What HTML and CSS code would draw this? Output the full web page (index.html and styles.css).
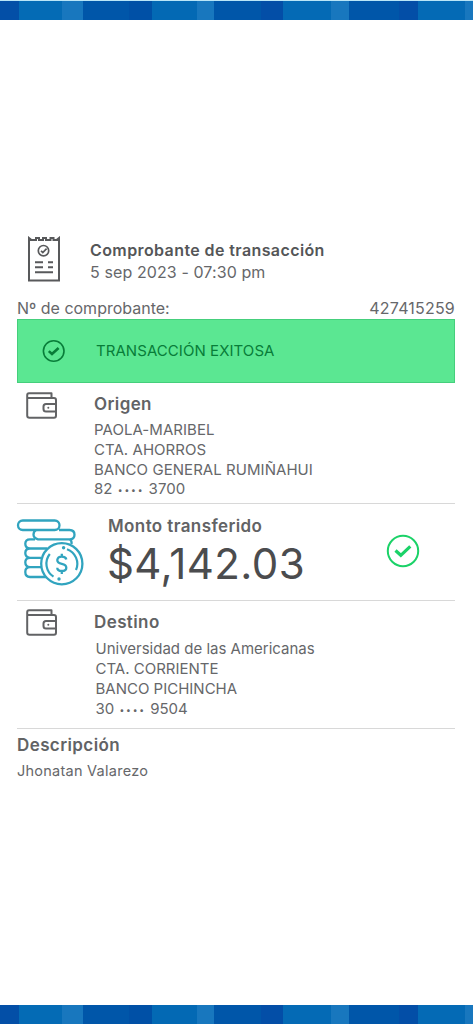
FILE: index.html
```html
<!DOCTYPE html>
<html lang="es">
<head>
<meta charset="utf-8">
<title>Comprobante de transacción</title>
<link rel="stylesheet" href="styles.css">
</head>
<body>
<div class="page">
  <div class="stripe stripe-top"></div>
  <main class="receipt">
    <header class="head">
      <svg class="icon-receipt" width="34" height="46" viewBox="0 0 34 46" fill="none" stroke="#58595b" stroke-width="2">
        <path d="M2 2V44.500H32V2L29.500 4H26.500V2H23.500V4H19V2H16V4H12V2H9V4H4.500Z"/>
        <circle cx="16.500" cy="14.700" r="5.200" stroke-width="1.700"/>
        <path d="M14 14.900l1.800 1.600 3.800-3.900" stroke-width="1.700"/>
        <path d="M8 26.200h8M21 26.200h5M8 31.200h8M21 31.200h5M8 36.200h18"/>
      </svg>
      <div>
        <h1 class="title">Comprobante de transacción</h1>
        <p class="date">5 sep 2023 - 07:30 pm</p>
      </div>
    </header>
    <div class="number"><span class="number-label">Nº de comprobante:</span><span class="number-value">427415259</span></div>
    <div class="status">
      <svg width="24" height="24" viewBox="0 0 24 24" fill="none" stroke="#087d39">
        <circle cx="11.700" cy="12" r="10.300" stroke-width="1.600"/>
        <path d="M6.800 12.100l3.200 2.900 6.600-6" stroke-width="2.600"/>
      </svg>
      <span class="status-text">TRANSACCIÓN EXITOSA</span>
    </div>
    <section class="account origin">
      <svg class="icon-wallet" width="32" height="28" viewBox="0 0 32 28" fill="none" stroke="#626365" stroke-width="2" stroke-linejoin="round">
        <path d="M25.500 6V1.300H3Q1.200 1.300 1.200 3.300V23.500Q1.200 25.800 3.500 25.800H28Q30 25.800 30 23.500V8Q30 6 28 6H1.200M30 12H20Q17.500 12 17.500 14.500V17Q17.500 19.500 20 19.500H30"/>
        <circle cx="22.300" cy="15.700" r="1" fill="#626365" stroke="none"/>
      </svg>
      <div>
        <h2 class="heading">Origen</h2>
        <p class="line">PAOLA-MARIBEL</p>
        <p class="line">CTA. AHORROS</p>
        <p class="line">BANCO GENERAL RUMIÑAHUI</p>
        <p class="line">82 <span class="dots">••••</span> 3700</p>
      </div>
    </section>
    <section class="amount">
      <svg class="icon-coins" width="68" height="68" viewBox="0 0 68 68" fill="none" stroke="#31a4bf" stroke-width="2.300">
        <rect x="2" y="1.500" width="41.500" height="9.500" rx="4.750"/>
        <path d="M20 11Q17.500 12.500 17.500 15.700T22 20.300H53.500Q58.500 20.300 58.500 15.700T53.500 11H43"/>
        <path d="M19 20.300H14Q9.300 20.300 9.300 24.800T14 29.500H31M14 29.500Q9.300 29.500 9.300 34T14 38.800H25M14 38.800Q9.300 38.800 9.300 43.300T14 48.200H25M14 48.200Q9.300 48.200 9.300 53T14 58H30M54 20.300Q56 22 55.500 25"/>
        <circle cx="45.800" cy="44.700" r="20.600"/>
        <path d="M33.800 35A15.500 15.500 0 0 0 37.500 57.700M51 30.200A15.500 15.500 0 0 1 60 51" stroke-width="2.200"/>
        <path d="M50.300 40.500Q49.800 37.700 45.800 37.700T41.300 41Q41.300 44 45.800 44.800T50.300 48.700Q50.300 52 45.800 52T41.300 48.700M45.800 34.700V37.700M45.800 52V55"/>
        <circle cx="47.600" cy="28.800" r="1.700" fill="#31a4bf" stroke="none"/>
        <circle cx="43" cy="60" r="1.700" fill="#31a4bf" stroke="none"/>
      </svg>
      <div class="amount-text">
        <h2 class="heading">Monto transferido</h2>
        <p class="total">$4,142.03</p>
      </div>
      <svg class="icon-check" width="34" height="34" viewBox="0 0 34 34" fill="none" stroke="#1bd268">
        <circle cx="17" cy="17" r="15.200" stroke-width="2"/>
        <path d="M9.500 16.500l5.300 4.800 9.500-9" stroke-width="3.200"/>
      </svg>
    </section>
    <section class="account target">
      <svg class="icon-wallet" width="32" height="28" viewBox="0 0 32 28" fill="none" stroke="#626365" stroke-width="2" stroke-linejoin="round">
        <path d="M25.500 6V1.300H3Q1.200 1.300 1.200 3.300V23.500Q1.200 25.800 3.500 25.800H28Q30 25.800 30 23.500V8Q30 6 28 6H1.200M30 12H20Q17.500 12 17.500 14.500V17Q17.500 19.500 20 19.500H30"/>
        <circle cx="22.300" cy="15.700" r="1" fill="#626365" stroke="none"/>
      </svg>
      <div>
        <h2 class="heading">Destino</h2>
        <p class="line">Universidad de las Americanas</p>
        <p class="line">CTA. CORRIENTE</p>
        <p class="line">BANCO PICHINCHA</p>
        <p class="line">30 <span class="dots">••••</span> 9504</p>
      </div>
    </section>
    <section class="description">
      <h2 class="heading">Descripción</h2>
      <p class="line">Jhonatan Valarezo</p>
    </section>
  </main>
  <div class="stripe stripe-bottom"></div>
</div>
</body>
</html>
```
FILE: styles.css
```css
* { box-sizing: border-box; }
body, h1, h2, p { margin: 0; }
body { background: #fff; color: #66676a; font-family: Inter, "Liberation Sans", sans-serif; }
svg { display: block; flex: none; }
.page { width: 473px; height: 1024px; display: flex; flex-direction: column; overflow: hidden; }
.stripe {
  flex: none;
  background: linear-gradient(90deg, #034fa7 0 19px, #046bb5 19px 62px, #1877be 62px 83px, #0056a9 83px 129px, #0050a6 129px 152px, #0369b4 152px 197px, #1877be 197px 214px, #0056a9 214px 261px, #034ea7 261px 283px, #046ab5 283px 331px, #1877be 331px 349px, #0056a9 349px 399px, #034ea7 399px 418px, #046ab5 418px 465px, #1877be 465px);
}
.stripe-top { height: 20px; border-top: 1px solid #b9e5f7; }
.stripe-bottom { height: 19px; }
.receipt { flex: 1; padding: 216px 18px 0 17px; }
.head { height: 62px; display: flex; }
.head > div { padding-top: 3px; }
.icon-receipt { margin-right: 29px; margin-left: 10px; }
.title { font-size: 16px; line-height: 22px; font-weight: 600; color: #555658; letter-spacing: .4px; white-space: nowrap; }
.date { font-size: 16px; line-height: 22px; letter-spacing: .1px; white-space: nowrap; }
.number { height: 21px; display: flex; justify-content: space-between; font-size: 16px; line-height: 20px; }
.number-value { letter-spacing: .2px; }
.status { height: 64px; display: flex; align-items: center; padding: 0 0 1px 24px; gap: 30px; background: #5be792; border: 1px solid #45cf7c; color: #087d39; font-size: 15px; letter-spacing: .06px; }
.account { display: flex; border-bottom: 1px solid #d8d8d8; }
.icon-wallet { margin-left: 9px; margin-right: 36px; }
.origin { height: 121px; padding-top: 9px; }
.target { height: 128px; padding-top: 8px; }
.heading { font-size: 17px; line-height: 24px; font-weight: 600; color: #626365; letter-spacing: .4px; white-space: nowrap; }
.line { font-size: 15px; line-height: 20px; letter-spacing: .05px; white-space: nowrap; }
.origin .heading { margin-bottom: 4px; }
.origin .line { line-height: 19.800px; }
.target .heading { margin: 1px 0 5px; }
.target .line { padding-left: 1.500px; line-height: 19.900px; letter-spacing: 0; }
.account .dots { font-size: 8.500px; letter-spacing: 1.850px; margin-left: 1px; vertical-align: 1px; line-height: 1; }
.amount { height: 97px; display: flex; border-bottom: 1px solid #d8d8d8; }
.icon-coins { margin: 15px 0 0 -1px; }
.amount-text { width: 297px; padding: 10px 0 0 24px; }
.total { font-size: 42px; line-height: 52px; letter-spacing: .4px; margin-left: -1px; color: #4b4c4e; }
.icon-check { margin: 30px 0 0 5px; }
.description { padding-top: 4px; }
.description .line { margin-top: 4px; font-size: 14.500px; letter-spacing: .25px; }
```
